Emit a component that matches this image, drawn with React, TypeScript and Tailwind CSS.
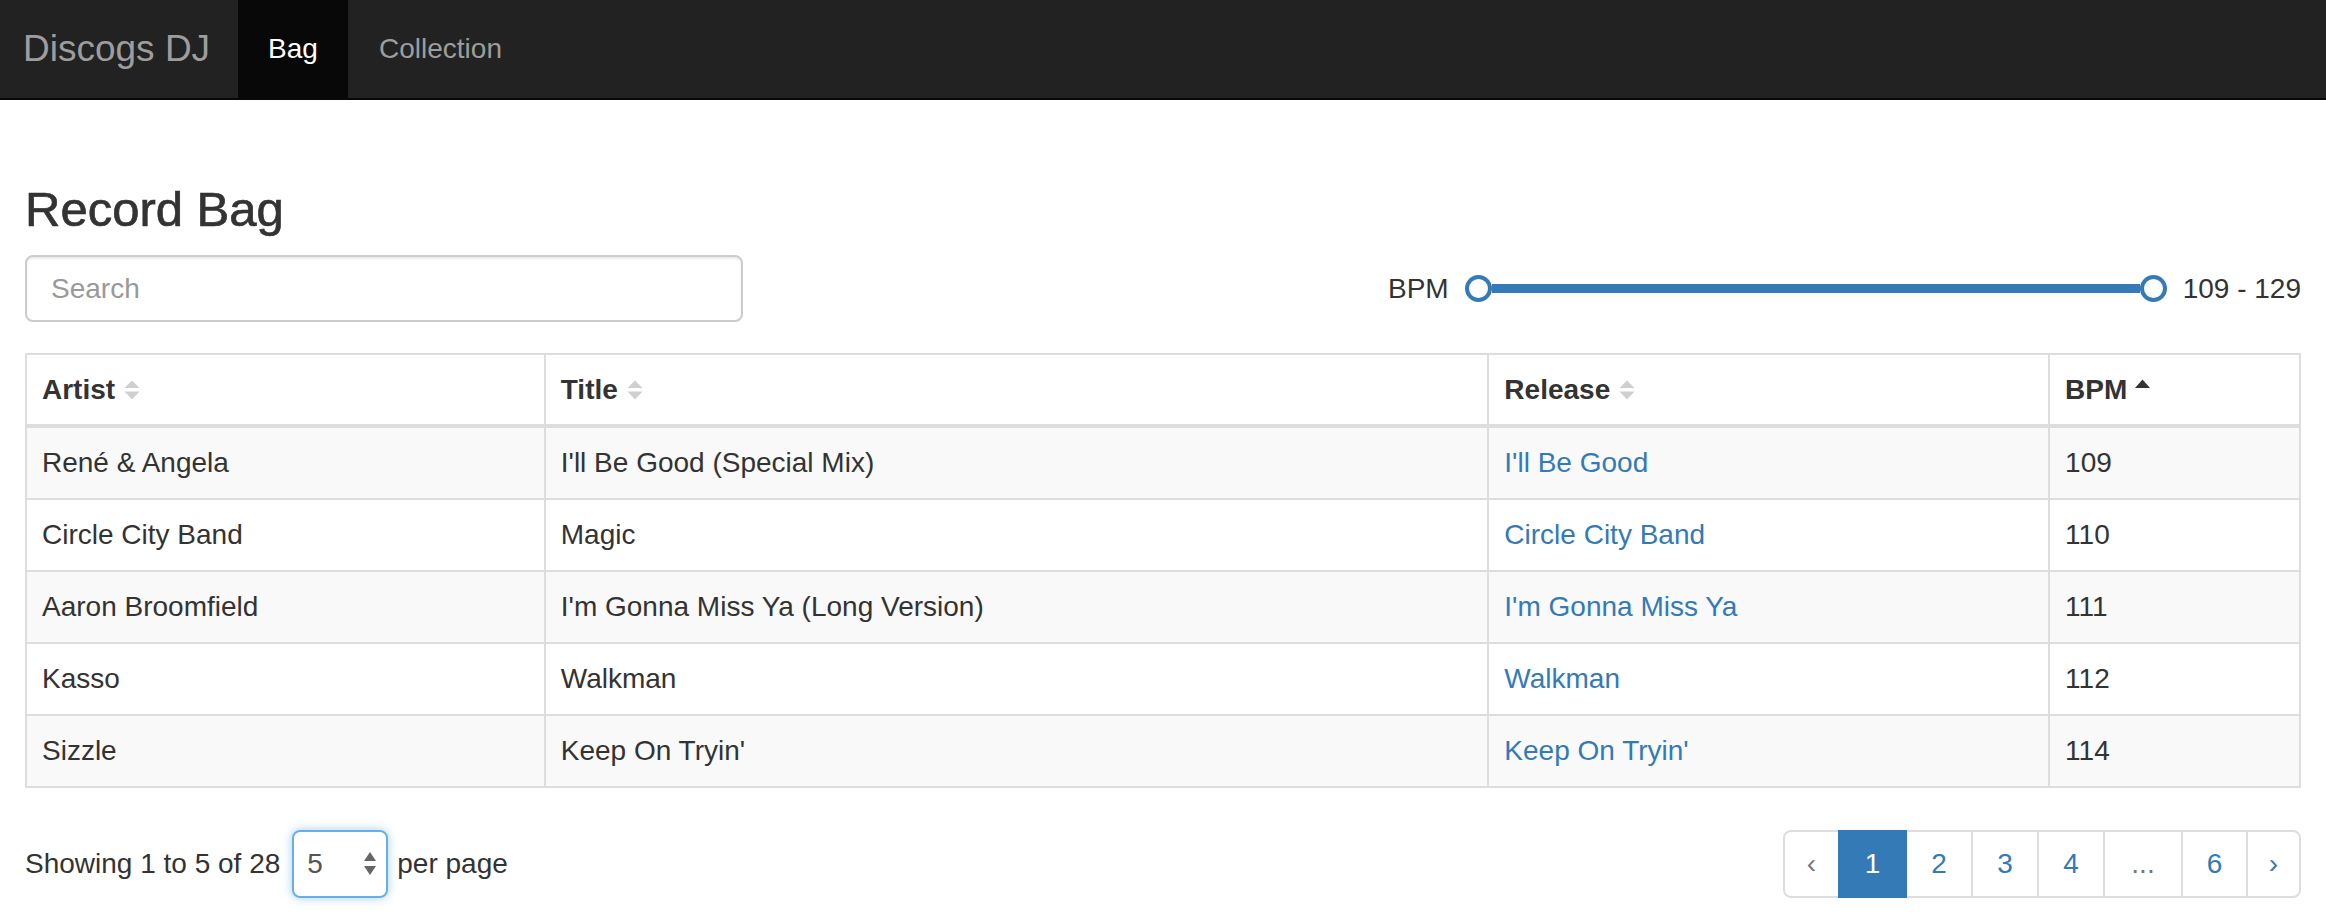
import React from "react";

const rows: [string, string, string, string][] = [
  ["René & Angela", "I'll Be Good (Special Mix)", "I'll Be Good", "109"],
  ["Circle City Band", "Magic", "Circle City Band", "110"],
  ["Aaron Broomfield", "I'm Gonna Miss Ya (Long Version)", "I'm Gonna Miss Ya", "111"],
  ["Kasso", "Walkman", "Walkman", "112"],
  ["Sizzle", "Keep On Tryin'", "Keep On Tryin'", "114"],
];

function SortBoth() {
  return (
    <svg width="16" height="20" viewBox="0 0 16 20" className="ml-[9px] shrink-0">
      <path d="M0.5 8 L8 0.5 L15.5 8 Z" fill="#cfcfcf" />
      <path d="M0.5 11.5 L8 19.5 L15.5 11.5 Z" fill="#cfcfcf" />
    </svg>
  );
}

function SortUp() {
  return (
    <svg width="15" height="9" viewBox="0 0 15 9" className="ml-[8px] shrink-0 self-start mt-[24px]">
      <path d="M0 9 L7.5 0.5 L15 9 Z" fill="#333" />
    </svg>
  );
}

const colW = ["w-[519px] border-r-2", "w-[944px] border-r-2", "w-[561px] border-r-2", "w-[249px]"];

export default function App() {
  return (
    <div className="min-h-screen bg-white font-['Liberation_Sans',Arial,sans-serif] text-[28px] text-[#333]">
      <nav className="h-[100px] bg-[#222] border-b-2 border-[#080808] flex items-stretch">
        <div className="w-[238px] pl-[23px] flex items-center text-[37px] text-[#9d9d9d]">Discogs DJ</div>
        <div className="w-[110px] bg-[#080808] flex items-center justify-center text-white">Bag</div>
        <div className="px-[31px] flex items-center text-[#9d9d9d]">Collection</div>
      </nav>

      <main className="px-[25px]">
        <h1 className="mt-[83px] text-[49px] leading-[53px] font-normal text-[#333] [-webkit-text-stroke:0.7px_#333]">Record Bag</h1>

        <div className="mt-[19px] h-[67px] flex items-center justify-between">
          <input
            type="text"
            placeholder="Search"
            className="w-[718px] h-[67px] border-2 border-[#ccc] rounded-[8px] pl-[24px] text-[28px] text-[#555] placeholder:text-[#999] outline-none shadow-[inset_0_2px_2px_rgba(0,0,0,0.075)]"
          />
          <div className="flex items-center">
            <span className="mr-[16px]">BPM</span>
            <div className="w-[702px] flex items-center">
              <div className="w-[27px] h-[27px] rounded-full border-4 border-[#337ab7] bg-white shrink-0" />
              <div className="flex-1 h-[9px] bg-[#337ab7]" />
              <div className="w-[27px] h-[27px] rounded-full border-4 border-[#337ab7] bg-white shrink-0" />
            </div>
            <span className="ml-[16px]">109 - 129</span>
          </div>
        </div>

        <div className="mt-[31px] border-2 border-[#ddd]">
          <div className="h-[73px] border-b-4 border-[#ddd] flex font-bold">
            {["Artist", "Title", "Release", "BPM"].map((h, i) => (
              <div key={h} className={`${colW[i]} border-[#ddd] px-[15px] flex items-center`}>
                <span>{h}</span>
                {i < 3 ? <SortBoth /> : <SortUp />}
              </div>
            ))}
          </div>
          {rows.map((r, ri) => (
            <div
              key={ri}
              className={`flex ${ri < rows.length - 1 ? "h-[72px] border-b-2" : "h-[70px]"} border-[#ddd] ${ri % 2 === 0 ? "bg-[#f9f9f9]" : "bg-white"}`}
            >
              {r.map((c, ci) => (
                <div key={ci} className={`${colW[ci]} border-[#ddd] px-[15px] flex items-center ${ci === 2 ? "text-[#337ab7]" : ""}`}>
                  {c}
                </div>
              ))}
            </div>
          ))}
        </div>

        <div className="mt-[42px] h-[68px] flex items-center justify-between">
          <div className="flex items-center">
            <span>Showing 1 to 5 of 28</span>
            <div className="ml-[12px] w-[96px] h-[68px] border-2 border-[#66afe9] rounded-[8px] shadow-[0_0_10px_rgba(102,175,233,0.6)] flex items-center justify-between pl-[13px] pr-[9px] text-[#555]">
              <span>5</span>
              <svg width="14" height="30" viewBox="0 0 14 30">
                <path d="M1 12 L7 3 L13 12 Z" fill="#666" />
                <path d="M1 17 L7 26 L13 17 Z" fill="#666" />
              </svg>
            </div>
            <span className="ml-[9px]">per page</span>
          </div>

          <div className="flex h-[68px]">
            <div className="w-[57px] h-full border-2 border-[#ddd] rounded-l-[8px] flex items-center justify-center text-[#777]">‹</div>
            <div className="relative z-10 w-[69px] h-full -ml-[2px] border-2 border-[#337ab7] bg-[#337ab7] flex items-center justify-center text-white">1</div>
            <div className="w-[68px] h-full -ml-[2px] border-2 border-[#ddd] flex items-center justify-center text-[#337ab7]">2</div>
            <div className="w-[68px] h-full -ml-[2px] border-2 border-[#ddd] flex items-center justify-center text-[#337ab7]">3</div>
            <div className="w-[68px] h-full -ml-[2px] border-2 border-[#ddd] flex items-center justify-center text-[#337ab7]">4</div>
            <div className="w-[80px] h-full -ml-[2px] border-2 border-[#ddd] flex items-center justify-center text-[#777]">...</div>
            <div className="w-[67px] h-full -ml-[2px] border-2 border-[#ddd] flex items-center justify-center text-[#337ab7]">6</div>
            <div className="w-[55px] h-full -ml-[2px] border-2 border-[#ddd] rounded-r-[8px] flex items-center justify-center text-[#337ab7]">›</div>
          </div>
        </div>
      </main>
    </div>
  );
}
